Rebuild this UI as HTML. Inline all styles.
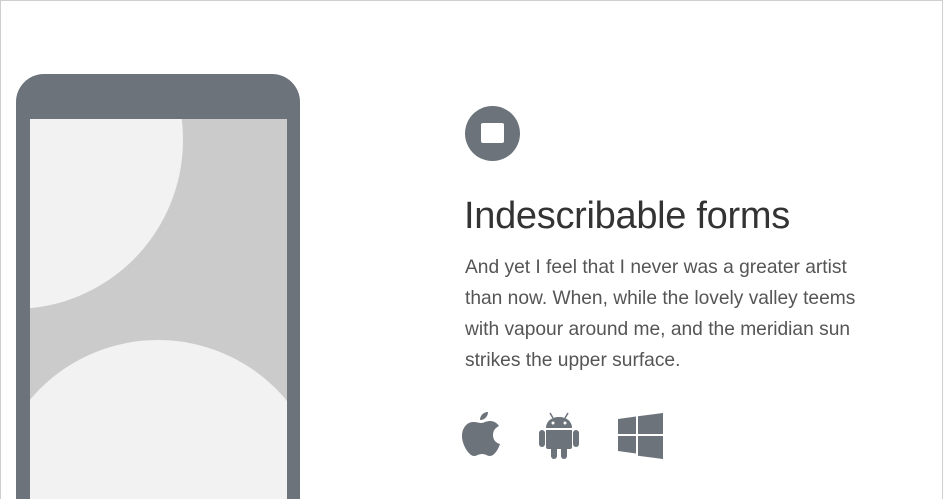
<!DOCTYPE html>
<html><head><meta charset="utf-8"><style>
html,body{margin:0;padding:0;width:943px;height:499px;overflow:hidden;}
body{background:#fff;position:relative;font-family:"Liberation Sans",sans-serif;}
.frame{position:absolute;left:0;top:0;width:941px;height:498px;border:1px solid #cfcfcf;border-bottom:none;}
.phone{position:absolute;left:16px;top:74px;width:284px;height:425px;background:#6c737b;border-radius:28px 28px 0 0;}
.screen{position:absolute;left:30px;top:119px;width:257px;height:380px;background:#cbcbcb;overflow:hidden;}
.c1{position:absolute;left:-185px;top:-148px;width:338px;height:338px;border-radius:50%;background:#f2f2f2;}
.c2{position:absolute;left:-39px;top:221px;width:334px;height:334px;border-radius:50%;background:#f2f2f2;}
.icon{position:absolute;left:465px;top:106px;width:55px;height:55px;border-radius:50%;background:#6c737b;}
.icon i{position:absolute;left:16px;top:17px;width:23px;height:20px;background:#fff;border-radius:2px;}
h1{position:absolute;left:464px;top:193px;margin:0;font-weight:normal;font-size:38px;line-height:46px;color:#333;letter-spacing:-0.3px;white-space:nowrap;}
p{position:absolute;left:465px;top:252px;margin:0;font-size:19.2px;line-height:31px;color:#555;white-space:nowrap;}
svg{position:absolute;}
</style></head><body>
<div class="frame"></div>
<div class="phone"></div>
<div class="screen"><div class="c1"></div><div class="c2"></div></div>
<div class="icon"><i></i></div>
<h1>Indescribable forms</h1>
<p>And yet I feel that I never was a greater artist<br>than now. When, while the lovely valley teems<br>with vapour around me, and the meridian sun<br>strikes the upper surface.</p>
<svg style="left:461px;top:410px" width="40" height="46" viewBox="0 0 40 46"><path fill="#6c737b" d="M27 2c0 4-3 8-8 8 0-4 3-8 8-8zM20 13c3 0 5-2 9-2 4 0 7 2 9 5-4 2-6 5-6 9 0 5 3 8 7 9-2 6-6 12-10 12-3 0-4-2-8-2s-5 2-8 2C8 46 1 35 1 26c0-9 6-14 11-14 4 0 6 1 8 1z"/></svg>
<svg style="left:538px;top:412px" width="42" height="48" viewBox="0 0 42 48"><g fill="#6c737b" stroke="#6c737b"><line x1="12" y1="1" x2="15" y2="6" stroke-width="1.5"/><line x1="30" y1="1" x2="27" y2="6" stroke-width="1.5"/></g><path fill="#6c737b" d="M8 16c0-7 6-11 13-11s13 4 13 11z"/><circle cx="15" cy="11" r="1.5" fill="#fff"/><circle cx="27" cy="11" r="1.5" fill="#fff"/><path fill="#6c737b" d="M8 18h26v17a2 2 0 0 1-2 2H10a2 2 0 0 1-2-2z"/><rect x="1" y="18" width="6" height="17" rx="3" fill="#6c737b"/><rect x="35" y="18" width="6" height="17" rx="3" fill="#6c737b"/><rect x="13" y="34" width="6" height="13" rx="3" fill="#6c737b"/><rect x="23" y="34" width="6" height="13" rx="3" fill="#6c737b"/></svg>
<svg style="left:617px;top:413px" width="46" height="46" viewBox="0 0 46 46"><path fill="#6c737b" d="M1 6l18-2.5V21H1zM21 3.2L46 0v21H21zM1 23h18v17.5L1 38zM21 23h25v23l-25-3.3z"/></svg>
</body></html>
